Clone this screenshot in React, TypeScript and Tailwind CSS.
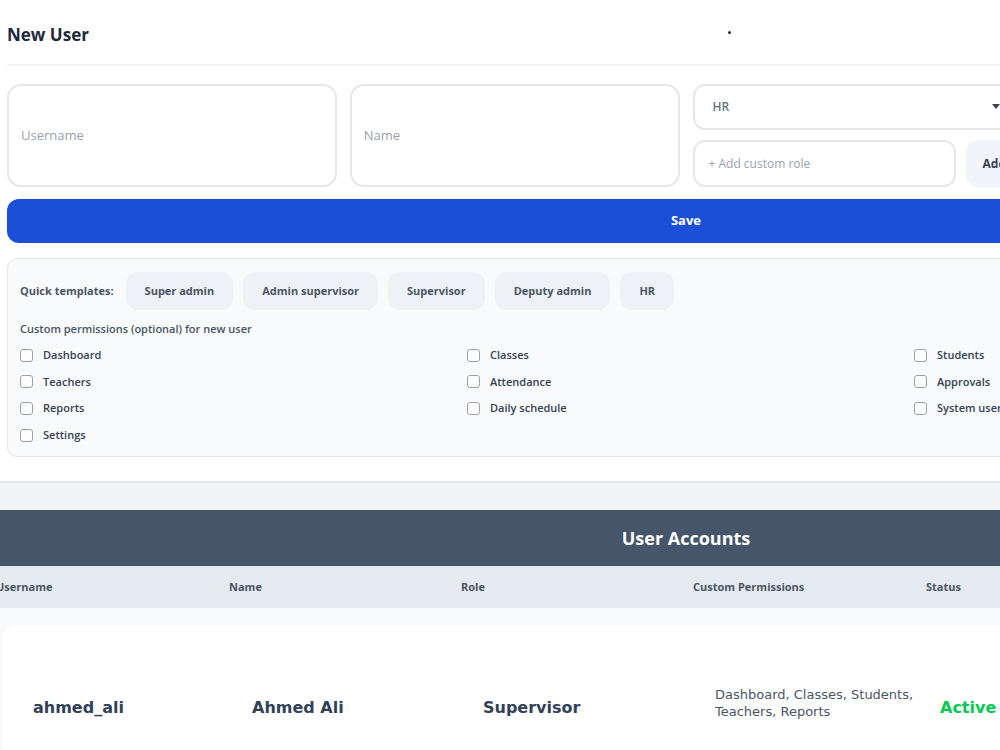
import React from 'react';

const templates = ['Super admin', 'Admin supervisor', 'Supervisor', 'Deputy admin', 'HR'];

const permissions = [
  'Dashboard', 'Classes', 'Students',
  'Teachers', 'Attendance', 'Approvals',
  'Reports', 'Daily schedule', 'System users',
  'Settings',
];

const Checkbox = ({ label }: { label: string }) => (
  <label className="flex items-center gap-[10px] h-[26.6px] whitespace-nowrap">
    <span className="w-[13px] h-[13px] rounded-[3px] border-[1.5px] border-gray-400 bg-white shrink-0" />
    <span className="text-[11px] font-semibold text-gray-700">{label}</span>
  </label>
);

const App = () => {
  return (
    <div
      className="w-[1000px] h-[750px] overflow-hidden bg-white"
      style={{ fontFamily: '"Open Sans", "Noto Sans", sans-serif' }}
    >
      <div className="w-[1372px]">
        {/* New user form */}
        <section className="px-[7px] pb-[24px] border-b-2 border-gray-200">
          <div className="flex items-center h-[66px] pt-[6px] border-b-2 border-gray-100">
            <h1 className="text-[17px] font-bold text-gray-800">New User</h1>
            <span className="ml-[639px] mb-[6px] w-[3px] h-[3px] rounded-full bg-gray-800" />
          </div>

          <div className="grid grid-cols-4 gap-[13px] mt-[18px]">
            <div className="h-[103px] rounded-[14px] border-2 border-gray-200 flex items-center px-[12px] text-[13px] text-gray-400">
              Username
            </div>
            <div className="h-[103px] rounded-[14px] border-2 border-gray-200 flex items-center px-[12px] text-[13px] text-gray-400">
              Name
            </div>
            <div className="flex flex-col gap-[10px]">
              <div className="h-[46px] rounded-[12px] border-2 border-gray-200 flex items-center justify-between pl-[18px] pr-[20px]">
                <span className="text-[12px] font-semibold text-gray-500">HR</span>
                <svg width="8" height="6" viewBox="0 0 8 6">
                  <path d="M0 0h8L4 5z" fill="#374151" />
                </svg>
              </div>
              <div className="flex gap-[10px] h-[47px]">
                <div className="flex-1 rounded-[12px] border-2 border-gray-200 flex items-center pl-[14px] text-[12px] text-gray-400">
                  + Add custom role
                </div>
                <button className="w-[56px] rounded-[12px] bg-slate-100 text-[12px] font-bold text-gray-700">
                  Add
                </button>
              </div>
            </div>
            <div />
          </div>

          <button className="mt-[12px] w-full h-[44px] rounded-[12px] bg-[#1d4ed8] text-white text-[13px] font-bold">
            Save
          </button>

          <div className="mt-[15px] rounded-[10px] border border-gray-200 bg-[#f8fafc] px-[12px] pt-[13px] pb-[8px]">
            <div className="flex items-center gap-[10px]">
              <span className="text-[11px] font-bold text-gray-600 mr-[2px]">Quick templates:</span>
              {templates.map((t) => (
                <span
                  key={t}
                  className="h-[38px] px-[19px] rounded-[12px] bg-[#eef2f6] flex items-center text-[11px] font-bold text-gray-600"
                >
                  {t}
                </span>
              ))}
            </div>
            <p className="mt-[11px] text-[11px] font-semibold text-gray-600 leading-[16px]">
              Custom permissions (optional) for new user
            </p>
            <div className="mt-[5px] grid grid-cols-[447px_447px_1fr]">
              {permissions.map((p) => (
                <Checkbox key={p} label={p} />
              ))}
            </div>
          </div>
        </section>

        {/* User accounts table */}
        <section className="bg-[#f1f3f7] pt-[27px]">
          <div className="h-[56px] bg-[#465569] flex items-center justify-center">
            <h2 className="text-[18px] font-bold text-white">User Accounts</h2>
          </div>
          <div className="h-[42px] bg-[#e5e9f0] grid grid-cols-[229px_232px_232px_233px_1fr] items-center text-[11px] font-bold text-gray-600">
            <span className="-ml-[4px]">Username</span>
            <span>Name</span>
            <span>Role</span>
            <span>Custom Permissions</span>
            <span>Status</span>
          </div>
          <div className="bg-[#f8fafc] pt-[17px] pl-[2px]">
            <div
              className="bg-white rounded-tl-[14px] h-[200px] pt-[63px] pl-[31px] grid grid-cols-[219px_231px_232px_225px_1fr] items-start"
              style={{ fontFamily: '"DejaVu Sans", sans-serif' }}
            >
              <span className="text-[16px] font-bold text-slate-700 leading-[40px]">ahmed_ali</span>
              <span className="text-[16px] font-bold text-slate-700 leading-[40px]">Ahmed Ali</span>
              <span className="text-[16px] font-bold text-slate-700 leading-[40px]">Supervisor</span>
              <span className="text-[13px] text-gray-600 leading-[17px] -mt-[2px]">
                Dashboard, Classes, Students,
                <br />
                Teachers, Reports
              </span>
              <span className="text-[16px] font-bold text-green-500 leading-[40px]">Active</span>
            </div>
          </div>
        </section>
      </div>
    </div>
  );
};

export default App;
